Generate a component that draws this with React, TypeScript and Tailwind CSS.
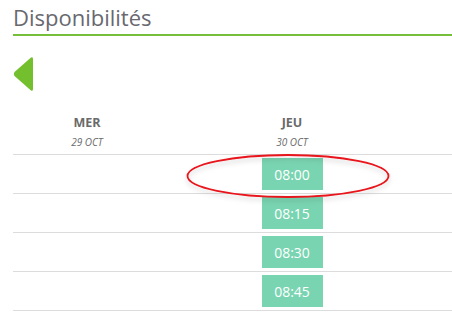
import React from "react";

const slots = ["08:00", "08:15", "08:30", "08:45"];

export default function App() {
  return (
    <div
      className="relative h-[312px] w-[452px] overflow-hidden bg-white"
      style={{ fontFamily: '"Open Sans", sans-serif' }}
    >
      <div className="pl-[13px] pt-[4px]">
        <h2 className="border-b-2 border-[#75bf3a] pb-[3px] text-[22px] leading-[27px] text-[#68686f]">
          Disponibilités
        </h2>

        <button className="mt-[20px] block h-[36px] w-[20px]">
          <svg width="20" height="36" viewBox="0 0 20 36">
            <path
              d="M18 1.5 Q20 0.5 20 3 L20 33 Q20 35.5 18 34.5 L1.5 20 Q0 18 1.5 16 Z"
              fill="#74bf2d"
            />
          </svg>
        </button>

        <div className="mt-[23px] flex text-[#6a6a6a]">
          <div className="w-[148px] text-center">
            <div className="text-[12.5px] font-bold leading-[16px]">MER</div>
            <div className="mt-[4px] text-[10px] italic leading-[14px]">29 OCT</div>
          </div>
          <div className="w-[262px] text-center">
            <div className="text-[12.5px] font-bold leading-[16px]">JEU</div>
            <div className="mt-[4px] text-[10px] italic leading-[14px]">30 OCT</div>
          </div>
        </div>

        <div className="mt-[5px]">
          {slots.map((s) => (
            <div key={s} className="flex border-t border-[#dcdcdc] py-[3px]">
              <div className="w-[148px]" />
              <div className="flex w-[262px] justify-center">
                <span className="flex h-[32px] w-[61px] items-center justify-center bg-[#79d4b1] text-[14px] text-white">
                  {s}
                </span>
              </div>
            </div>
          ))}
          <div className="border-t border-[#dcdcdc]" />
        </div>
      </div>

      <svg
        className="pointer-events-none absolute left-[180px] top-[150px]"
        width="220"
        height="60"
        viewBox="0 0 220 60"
      >
        <defs>
          <filter id="sh" x="-20%" y="-40%" width="140%" height="180%">
            <feDropShadow dx="0" dy="3" stdDeviation="2.5" floodColor="#000" floodOpacity="0.18" />
          </filter>
        </defs>
        <ellipse
          cx="108"
          cy="26"
          rx="100.5"
          ry="21"
          fill="none"
          stroke="#e8141a"
          strokeWidth="1.8"
          filter="url(#sh)"
        />
      </svg>
    </div>
  );
}
